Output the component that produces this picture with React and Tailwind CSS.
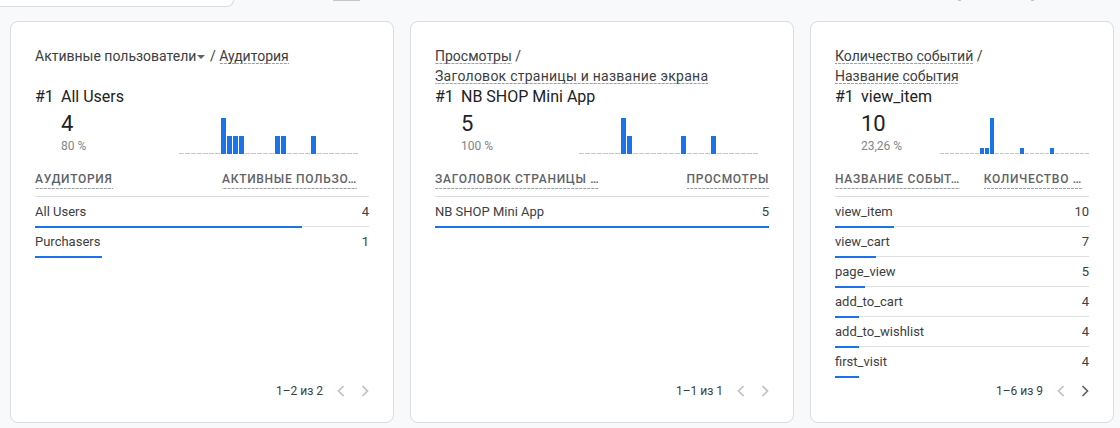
import React from 'react'

const DASH = 'bg-[linear-gradient(to_right,#9aa0a6_3px,transparent_3px)] bg-[length:4px_1px] bg-repeat-x bg-bottom'

function bars(list, tall, short) {
  const out = Array(30).fill(0)
  list.forEach(([i, big]) => { out[i] = big ? tall : short })
  return out
}

const CARDS = [
  {
    width: 'w-[384px]',
    title: (
      <>
        <span>Активные пользователи</span>
        <span className="inline-block align-middle mx-[1px] w-0 h-0 border-l-[4px] border-r-[4px] border-t-[4px] border-l-transparent border-r-transparent border-t-[#5f6368]" />
        <span> / </span>
        <span className={DASH}>Аудитория</span>
      </>
    ),
    top: 'All Users',
    value: '4',
    pct: '80 %',
    spark: { data: bars([[7, 1], [8], [9], [10], [16], [17], [22]], 36, 18), bar: 5, slot: 6, mr: 'mr-[11px]' },
    colA: 'АУДИТОРИЯ',
    colB: 'АКТИВНЫЕ ПОЛЬЗО…',
    colBmr: 'mr-[12px]',
    rows: [['All Users', 4, 80], ['Purchasers', 1, 20]],
    pages: '1–2 из 2',
    next: false,
  },
  {
    width: 'w-[384px]',
    title: (
      <>
        <span className={DASH}>Просмотры</span>
        <span> /</span>
        <br />
        <span className={`${DASH} tracking-[0.25px]`}>Заголовок страницы и название экрана</span>
      </>
    ),
    top: 'NB SHOP Mini App',
    value: '5',
    pct: '100 %',
    spark: { data: bars([[7, 1], [8], [17], [22]], 36, 18), bar: 5, slot: 6, mr: 'mr-[11px]' },
    colA: 'ЗАГОЛОВОК СТРАНИЦЫ …',
    colB: 'ПРОСМОТРЫ',
    colBmr: 'mr-0',
    rows: [['NB SHOP Mini App', 5, 100]],
    pages: '1–1 из 1',
    next: false,
  },
  {
    width: 'w-[304px]',
    title: (
      <>
        <span className={DASH}>Количество событий</span>
        <span> /</span>
        <br />
        <span className={DASH}>Название события</span>
      </>
    ),
    top: 'view_item',
    value: '10',
    pct: '23,26 %',
    spark: { data: bars([[8], [9], [10, 1], [16], [22]], 36, 6), bar: 4, slot: 5, mr: 'mr-0' },
    colA: 'НАЗВАНИЕ СОБЫТ…',
    colB: 'КОЛИЧЕСТВО …',
    colBmr: 'mr-[7px]',
    rows: [
      ['view_item', 10, 23.26],
      ['view_cart', 7, 16.28],
      ['page_view', 5, 11.63],
      ['add_to_cart', 4, 9.3],
      ['add_to_wishlist', 4, 9.3],
      ['first_visit', 4, 9.3],
    ],
    pages: '1–6 из 9',
    next: true,
  },
]

function Chevron({ dir, active }) {
  return (
    <svg width="8" height="12" viewBox="0 0 8 12" className={active ? 'text-[#5f6368]' : 'text-[#bdc1c6]'}>
      <polyline
        points={dir === 'left' ? '6.5,1 1.5,6 6.5,11' : '1.5,1 6.5,6 1.5,11'}
        fill="none"
        stroke="currentColor"
        strokeWidth="1.7"
      />
    </svg>
  )
}

function Spark({ data, bar, slot, mr }) {
  return (
    <div className={`ml-auto flex items-end h-[36px] ${mr}`}>
      {data.map((h, i) => (
        <div
          key={i}
          className={h ? 'bg-[#1a73e8]' : 'bg-[#c4c7c5]'}
          style={{ width: bar, height: h || 1, marginRight: i === data.length - 1 ? 0 : slot - bar }}
        />
      ))}
    </div>
  )
}

function Card({ c }) {
  return (
    <div className={`${c.width} h-[402px] shrink-0 flex flex-col rounded-lg border border-[#dadce0] bg-white px-6 pt-6`}>
      <div className="h-10 text-[14px] leading-5 text-[#3c4043]">{c.title}</div>

      <div className="h-5 mt-px flex items-center text-[16px] text-[#202124]">
        <span className="w-[26px]">#1</span>
        <span>{c.top}</span>
      </div>

      <div className="mt-[3px] flex items-end">
        <div className="pl-[26px]">
          <div className="text-[22px] leading-7 text-[#202124]">{c.value}</div>
          <div className="text-[12px] leading-4 text-[#80868b]">{c.pct}</div>
        </div>
        <Spark {...c.spark} />
      </div>

      <div className="pt-[17px] pb-[7px] border-b border-[#dadce0] flex justify-between text-[12px] font-medium tracking-[0.7px] text-[#5f6368] whitespace-nowrap">
        <span className={`${DASH} leading-4 pb-[2px]`}>{c.colA}</span>
        <span className={`${DASH} leading-4 pb-[2px] ${c.colBmr}`}>{c.colB}</span>
      </div>

      {c.rows.map(([name, val, pct], i) => (
        <div key={name} className="relative h-[30px] flex items-center justify-between text-[13px] text-[#3c4043]">
          <span>{name}</span>
          <span>{val}</span>
          {i < c.rows.length - 1 && <div className="absolute left-0 right-0 bottom-0 h-px bg-[#e0e0e0]" />}
          <div className="absolute left-0 bottom-[-1px] h-[2px] bg-[#1a73e8]" style={{ width: `${pct}%` }} />
        </div>
      ))}

      <div className="mt-auto mb-[19px] h-6 flex items-center justify-end text-[12px] text-[#3c4043]">
        <span>{c.pages}</span>
        <span className="ml-[14px]"><Chevron dir="left" /></span>
        <span className="ml-[16px]"><Chevron dir="right" active={c.next} /></span>
      </div>
    </div>
  )
}

export default function App() {
  return (
    <div className="w-[1120px] h-[428px] overflow-hidden bg-[#f8f9fa] font-['Roboto','Liberation_Sans',sans-serif]">
      <div className="h-[21px] flex items-start">
        <div className="w-[234px] h-[7px] bg-white border-r border-b border-[#dadce0] rounded-br-[8px]" />
        <div className="ml-[99px] w-[27px] h-px bg-[#c4c7c5]" />
        <div className="ml-[598px] w-[3px] h-px bg-[#c4c7c5]" />
        <div className="ml-[70px] w-[3px] h-px bg-[#c4c7c5]" />
      </div>
      <div className="flex gap-4 px-[10px]">
        {CARDS.map((c, i) => (
          <Card key={i} c={c} />
        ))}
      </div>
    </div>
  )
}
